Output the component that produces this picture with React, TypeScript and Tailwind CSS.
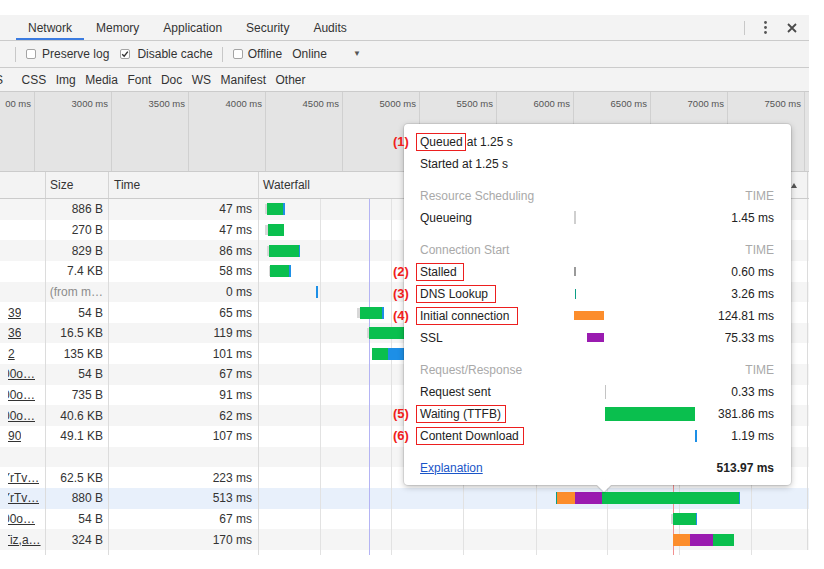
import React from 'react';

const F = "font-['Liberation_Sans',Arial,sans-serif]";

const tabs = ['Network', 'Memory', 'Application', 'Security', 'Audits'];
const filters = ['CSS', 'Img', 'Media', 'Font', 'Doc', 'WS', 'Manifest', 'Other'];
const ticks = ['3000 ms', '3500 ms', '4000 ms', '4500 ms', '5000 ms', '5500 ms', '6000 ms', '6500 ms', '7000 ms', '7500 ms'];

const G = 'bg-[#0abf4e]';
const B = 'bg-[#1d8fe6]';
const O = 'bg-[#fc8d2c]';
const P = 'bg-[#9a1bb0]';
const T = 'bg-[#0c9e86]';
const S = 'bg-[#d8d8d8]';

// [left, width, colour, height] relative to waterfall column start
type Seg = [number, number, string, number?];

type Row = {
  name: string;
  clip?: string;
  size: string;
  time: string;
  dim?: boolean;
  sel?: boolean;
  bars: Seg[];
};

const rows: Row[] = [
  { name: '', size: '886 B', time: '47 ms', bars: [[6, 3, S, 10], [8, 16, G], [24, 2, B]] },
  { name: '', size: '270 B', time: '47 ms', bars: [[6, 3, S, 10], [9, 16, G]] },
  { name: '', size: '829 B', time: '86 ms', bars: [[8, 3, S, 10], [10, 30, G], [40, 1, B]] },
  { name: '', size: '7.4 KB', time: '58 ms', bars: [[10, 2, S, 10], [11, 19, G], [30, 2, B]] },
  { name: '', size: '(from m…', time: '0 ms', dim: true, bars: [[57, 2, B]] },
  { name: '39', size: '54 B', time: '65 ms', bars: [[98, 3, S, 10], [101, 22, G], [123, 1.5, B]] },
  { name: '36', size: '16.5 KB', time: '119 ms', bars: [[108, 3, S, 10], [110, 60, G]] },
  { name: '2', size: '135 KB', time: '101 ms', bars: [[113, 16, G], [129, 40, B]] },
  { name: '00o…', clip: 'ml-[-5px]', size: '54 B', time: '67 ms', bars: [] },
  { name: '00o…', clip: 'ml-[-5px]', size: '735 B', time: '91 ms', bars: [] },
  { name: '00o…', clip: 'ml-[-5px]', size: '40.6 KB', time: '62 ms', bars: [] },
  { name: '90', size: '49.1 KB', time: '107 ms', bars: [] },
  { name: '', size: '', time: '', bars: [] },
  { name: 'YrTv…', clip: 'ml-[-6px]', size: '62.5 KB', time: '223 ms', bars: [] },
  {
    name: 'YrTv…', clip: 'ml-[-6px]', size: '880 B', time: '513 ms', sel: true,
    bars: [[296.5, 1.5, T], [298, 18, O], [316, 27, P], [343, 137, G], [480, 1, B]],
  },
  { name: '00o…', clip: 'ml-[-5px]', size: '54 B', time: '67 ms', bars: [[411.5, 3, S, 10], [414, 23, G], [437, 1, B]] },
  { name: 'Tiz,a…', clip: 'ml-[-5px]', size: '324 B', time: '170 ms', bars: [[414, 17, O], [431, 23, P], [454, 21, G]] },
];

const gridLines = [61, 132, 204, 277, 348, 420, 492];

function WaterfallLines() {
  return (
    <>
      {gridLines.map((x) => (
        <div key={x} className="absolute top-0 bottom-0 w-px bg-[#e2e2e2]" style={{ left: x }} />
      ))}
      <div className="absolute top-0 bottom-0 w-px bg-[#b4b4f4]" style={{ left: 110 }} />
      <div className="absolute top-0 bottom-0 w-px bg-[#f29090]" style={{ left: 414 }} />
    </>
  );
}

function Checkbox({ checked }: { checked?: boolean }) {
  return (
    <span className="flex h-[10px] w-[10px] items-center justify-center rounded-[2px] border border-[#a4a4a4] bg-white">
      {checked && (
        <svg width="8" height="8" viewBox="0 0 8 8">
          <path d="M1.2 4.2 L3.2 6.2 L6.8 1.6" fill="none" stroke="#333" strokeWidth="1.4" />
        </svg>
      )}
    </span>
  );
}

type PBar = { l: number; w: number; h: number; c: string };

function PRow({ label, val, n, box, bar }: { label: React.ReactNode; val?: string; n?: number; box?: number; bar?: PBar }) {
  return (
    <div className="relative flex h-[22px] items-center pl-[16px] pr-[17px]">
      {n && <span className="absolute left-[-11px] text-[13px] font-bold text-[#f0201c]">({n})</span>}
      {box && <span className="absolute left-[12px] top-[2px] h-[18px] border-[1.5px] border-[#ec1f1f]" style={{ width: box }} />}
      <span className="w-[154px] shrink-0 whitespace-nowrap">{label}</span>
      <div className="flex h-full w-[126px] items-center">
        {bar && <div className={bar.c} style={{ marginLeft: bar.l, width: bar.w, height: bar.h }} />}
      </div>
      <span className="flex-1 text-right">{val}</span>
    </div>
  );
}

function Section({ title }: { title: string }) {
  return (
    <div className="mt-[10px] flex h-[22px] items-center justify-between pl-[16px] pr-[17px] text-[#a9a9a9]">
      <span>{title}</span>
      <span>TIME</span>
    </div>
  );
}

function Popup() {
  return (
    <div className="absolute left-[404px] top-[124px] h-[361px] w-[387px] rounded-[4px] bg-white pt-[6.7px] text-[12px] text-[#222] shadow-[0_0_0_1px_rgba(0,0,0,0.08),0_2px_6px_rgba(0,0,0,0.25)]">
      <div className="absolute bottom-[-5px] left-[195px] h-[10px] w-[10px] rotate-45 bg-white shadow-[1px_1px_1px_rgba(0,0,0,0.15)]" />
      <div className="relative">
        <PRow n={1} box={50} label={<><span className="mr-[4px]">Queued</span>at 1.25 s</>} />
        <PRow label="Started at 1.25 s" />
        <Section title="Resource Scheduling" />
        <PRow label="Queueing" val="1.45 ms" bar={{ l: 0, w: 1.5, h: 13, c: 'bg-[#cfcfcf]' }} />
        <Section title="Connection Start" />
        <PRow n={2} box={48} label="Stalled" val="0.60 ms" bar={{ l: 0, w: 2, h: 9, c: 'bg-[#9a9a9a]' }} />
        <PRow n={3} box={80} label="DNS Lookup" val="3.26 ms" bar={{ l: 0.5, w: 1.5, h: 10, c: T }} />
        <PRow n={4} box={102} label="Initial connection" val="124.81 ms" bar={{ l: 0, w: 30, h: 9, c: O }} />
        <PRow label="SSL" val="75.33 ms" bar={{ l: 12.7, w: 17.3, h: 9, c: P }} />
        <Section title="Request/Response" />
        <PRow label="Request sent" val="0.33 ms" bar={{ l: 30.7, w: 1.5, h: 14, c: 'bg-[#c4c4c4]' }} />
        <PRow n={5} box={90} label="Waiting (TTFB)" val="381.86 ms" bar={{ l: 30.7, w: 90.3, h: 14, c: G }} />
        <PRow n={6} box={108} label="Content Download" val="1.19 ms" bar={{ l: 121.3, w: 1.3, h: 12, c: B }} />
        <div className="mt-[10px] flex h-[22px] items-center justify-between pl-[16px] pr-[17px]">
          <span className="text-[#1a55c8] underline">Explanation</span>
          <span className="font-bold">513.97 ms</span>
        </div>
      </div>
    </div>
  );
}

export default function App() {
  return (
    <div className={`relative h-[569px] w-[824px] overflow-hidden bg-white pt-[15px] text-[#333] ${F}`}>
      <div className="w-[809px] text-[12px]">
        {/* tab strip */}
        <div className="flex h-[26px] items-stretch border-b border-[#cbcbcb] bg-[#f3f3f3]">
          <div className="ml-[16px] flex">
            {tabs.map((t, i) => (
              <div
                key={t}
                className={i === 0 ? 'flex items-center border-b-2 border-[#3b7be0] px-3 pt-[2px]' : 'flex items-center px-3'}
              >
                {t}
              </div>
            ))}
          </div>
          <div className="ml-auto flex items-center">
            <span className="h-[14px] w-px bg-[#c8c8c8]" />
            <svg className="ml-[19px]" width="3" height="13" viewBox="0 0 3 13">
              <circle cx="1.5" cy="1.5" r="1.4" fill="#555" />
              <circle cx="1.5" cy="6.5" r="1.4" fill="#555" />
              <circle cx="1.5" cy="11.5" r="1.4" fill="#555" />
            </svg>
            <svg className="ml-[20px] mr-[12px]" width="10" height="10" viewBox="0 0 10 10">
              <path d="M1 1 L9 9 M9 1 L1 9" stroke="#4a4a4a" strokeWidth="1.8" />
            </svg>
          </div>
        </div>

        {/* toolbar */}
        <div className="flex h-[27px] items-center border-b border-[#cbcbcb] bg-[#f3f3f3] pl-[15px]">
          <span className="h-[15px] w-px bg-[#c8c8c8]" />
          <span className="ml-[10px]"><Checkbox /></span>
          <span className="ml-[6px]">Preserve log</span>
          <span className="ml-[11px]"><Checkbox checked /></span>
          <span className="ml-[7px]">Disable cache</span>
          <span className="ml-[9px] h-[15px] w-px bg-[#c8c8c8]" />
          <span className="ml-[10px]"><Checkbox /></span>
          <span className="ml-[5px]">Offline</span>
          <span className="ml-[10px]">Online</span>
          <span className="ml-[26px] text-[8px] text-[#555]">▼</span>
        </div>

        {/* filter bar */}
        <div className="flex h-[24px] items-center gap-[9.5px] overflow-hidden border-b border-[#cbcbcb] bg-[#f3f3f3]">
          <span className="ml-[-11px] mr-[9px]">JS</span>
          {filters.map((f) => (
            <span key={f}>{f}</span>
          ))}
        </div>

        {/* overview */}
        <div className="flex h-[80px] border-b border-[#cbcbcb] bg-[#e4e4e4] text-[9.5px] text-[#555]">
          <div className="w-[35px] shrink-0 overflow-hidden border-r border-[#d0d0d0] pt-[5px] text-right">
            <span className="mr-[3px] whitespace-nowrap">00 ms</span>
          </div>
          {ticks.map((t) => (
            <div key={t} className="w-[77px] shrink-0 border-r border-[#d0d0d0] pr-[3px] pt-[5px] text-right">
              {t}
            </div>
          ))}
          <div className="flex-1" />
        </div>

        {/* table header */}
        <div className="flex h-[27px] items-center border-b border-[#cbcbcb] bg-[#f3f3f3]">
          <div className="h-full w-[46px] shrink-0 border-r border-[#d4d4d4]" />
          <div className="flex h-full w-[63px] shrink-0 items-center border-r border-[#d4d4d4] pl-[4px]">Size</div>
          <div className="flex h-full w-[150px] shrink-0 items-center border-r border-[#d4d4d4] pl-[5px]">Time</div>
          <div className="flex h-full w-[549px] shrink-0 items-center border-r border-[#d4d4d4] pl-[4px]">
            <span>Waterfall</span>
            <svg className="ml-auto mr-[10px]" width="6" height="5" viewBox="0 0 6 5">
              <path d="M3 0 L6 5 L0 5 Z" fill="#555" />
            </svg>
          </div>
        </div>

        {/* rows */}
        {rows.map((r, i) => (
          <div
            key={i}
            className={`flex h-[20.65px] items-center ${r.sel ? 'bg-[#e8f0fb]' : i % 2 === 0 ? 'bg-[#f5f5f5]' : 'bg-white'}`}
          >
            <div className="flex h-full w-[46px] shrink-0 items-center border-r border-[#dcdcdc] pl-[8px]">
              <div className="overflow-hidden whitespace-nowrap">
                <span className={`block underline ${r.clip ?? ''}`}>{r.name}</span>
              </div>
            </div>
            <div className={`flex h-full w-[63px] shrink-0 items-center justify-end border-r border-[#dcdcdc] pr-[5px] ${r.dim ? 'text-[#8c8c8c]' : ''}`}>
              {r.size}
            </div>
            <div className="flex h-full w-[150px] shrink-0 items-center justify-end border-r border-[#dcdcdc] pr-[6px]">{r.time}</div>
            <div className="relative h-full w-[549px] shrink-0 border-r border-[#dcdcdc]">
              <WaterfallLines />
              {r.bars.map(([l, w, c, h], j) => (
                <div
                  key={j}
                  className={`absolute top-1/2 -translate-y-1/2 ${c}`}
                  style={{ left: l, width: w, height: h ?? 12 }}
                />
              ))}
            </div>
          </div>
        ))}
        <div className="flex h-[5px]">
          <div className="w-[46px] shrink-0 border-r border-[#dcdcdc]" />
          <div className="w-[63px] shrink-0 border-r border-[#dcdcdc]" />
          <div className="w-[150px] shrink-0 border-r border-[#dcdcdc]" />
          <div className="relative w-[549px] shrink-0">
            <WaterfallLines />
          </div>
        </div>
      </div>

      <Popup />
    </div>
  );
}
